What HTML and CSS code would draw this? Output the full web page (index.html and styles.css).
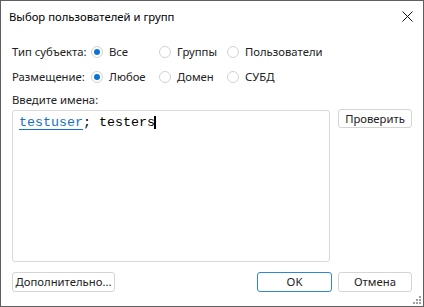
FILE: index.html
```html
<!DOCTYPE html>
<html lang="ru">
<head>
<meta charset="utf-8">
<title>Выбор пользователей и групп</title>
<link rel="stylesheet" href="styles.css">
</head>
<body>
<div class="window">
  <div class="titlebar">
    <span class="title">Выбор пользователей и групп</span>
    <span class="close">
      <svg width="11" height="11" viewBox="0 0 11 11"><path d="M0.5 0.5 L10.5 10.5 M10.5 0.5 L0.5 10.5" stroke="#111" stroke-width="1" fill="none"/></svg>
    </span>
  </div>
  <div class="content">
    <div class="opt-row">
      <span class="label">Тип субъекта:</span>
      <span class="radio"><span class="dot on"></span>Все</span>
      <span class="radio"><span class="dot"></span>Группы</span>
      <span class="radio"><span class="dot"></span>Пользователи</span>
    </div>
    <div class="opt-row">
      <span class="label">Размещение:</span>
      <span class="radio"><span class="dot on"></span>Любое</span>
      <span class="radio"><span class="dot"></span>Домен</span>
      <span class="radio"><span class="dot"></span>СУБД</span>
    </div>
    <div class="names-label">Введите имена:</div>
    <div class="names-area">
      <div class="names-box"><span class="resolved">testuser</span>; testers<span class="caret"></span></div>
      <button class="btn btn-check">Проверить</button>
    </div>
    <div class="footer">
      <button class="btn btn-more">Дополнительно...</button>
      <span class="spacer"></span>
      <button class="btn btn-ok">OK</button>
      <button class="btn btn-cancel">Отмена</button>
    </div>
  </div>
  <svg class="grip" width="10" height="10" viewBox="0 0 10 10">
    <g fill="#a0a0a0">
      <rect x="7" y="1" width="2" height="2"/>
      <rect x="4" y="4" width="2" height="2"/>
      <rect x="7" y="4" width="2" height="2"/>
      <rect x="1" y="7" width="2" height="2"/>
      <rect x="4" y="7" width="2" height="2"/>
      <rect x="7" y="7" width="2" height="2"/>
    </g>
  </svg>
</div>
</body>
</html>
```
FILE: styles.css
```css
* { box-sizing: border-box; }
html, body { margin: 0; padding: 0; background: #fff; }
body {
  font-family: "Noto Sans", "Open Sans", sans-serif;
  font-size: 11.3px;
  color: #1e1e1e;
}
.window {
  position: relative;
  width: 424px;
  height: 307px;
  border: 1px solid #5f5f5f;
  background: #fff;
  display: flex;
  flex-direction: column;
}
.titlebar {
  height: 30px;
  flex: none;
  display: flex;
  align-items: center;
  padding: 0 9px 0 8px;
}
.title { flex: 1; color: #000; white-space: nowrap; }
.close { width: 11px; height: 11px; display: block; margin-right: 1px; }
.close svg { display: block; }
.content {
  flex: 1;
  display: flex;
  flex-direction: column;
  padding: 8px 11px 13px 11px;
}
.opt-row {
  height: 25px;
  display: grid;
  grid-template-columns: 79px 68px 68px auto;
  align-items: center;
  white-space: nowrap;
}
.label { color: #222; }
.radio { display: flex; align-items: center; color: #222; }
.dot {
  width: 12px;
  height: 12px;
  border: 1px solid #d2d2d2;
  border-radius: 50%;
  margin-right: 6px;
  background: #fff;
  display: flex;
  align-items: center;
  justify-content: center;
}
.dot.on::after {
  content: "";
  width: 6px;
  height: 6px;
  border-radius: 50%;
  background: #0a74d6;
}
.names-label {
  margin-top: 3px;
  height: 16px;
  line-height: 16px;
  color: #222;
}
.names-area {
  margin-top: 2px;
  height: 152px;
  display: flex;
  gap: 8px;
  align-items: flex-start;
}
.names-box {
  width: 318px;
  height: 152px;
  border: 1px solid #d9d9d9;
  border-radius: 3px;
  padding: 4px 6px;
  font-family: "Liberation Mono", monospace;
  font-size: 13.33px;
  line-height: 16px;
  color: #000;
}
.resolved {
  color: #1670c4;
  text-decoration: underline;
  text-decoration-color: #1670c4;
  text-underline-offset: 3px;
}
.caret {
  display: inline-block;
  width: 2px;
  height: 13px;
  background: #000;
  vertical-align: -3px;
  margin-left: -1px;
}
.btn {
  font-family: inherit;
  font-size: 11.3px;
  color: #222;
  background: #fff;
  border: 1px solid #d5d5d5;
  border-radius: 3px;
  padding: 0;
  height: 20px;
  line-height: 18px;
  white-space: nowrap;
}
.btn-check { width: 74px; height: 19px; margin-top: -1px; line-height: 17px; }
.footer {
  margin-top: 10px;
  display: flex;
  gap: 6px;
  height: 20px;
}
.spacer { flex: 1; }
.btn-more { width: 103px; }
.btn-ok { width: 75px; border-color: #2f86d3; }
.btn-cancel { width: 74px; }
.grip {
  position: absolute;
  right: 1px;
  bottom: 1px;
  display: block;
}
```
